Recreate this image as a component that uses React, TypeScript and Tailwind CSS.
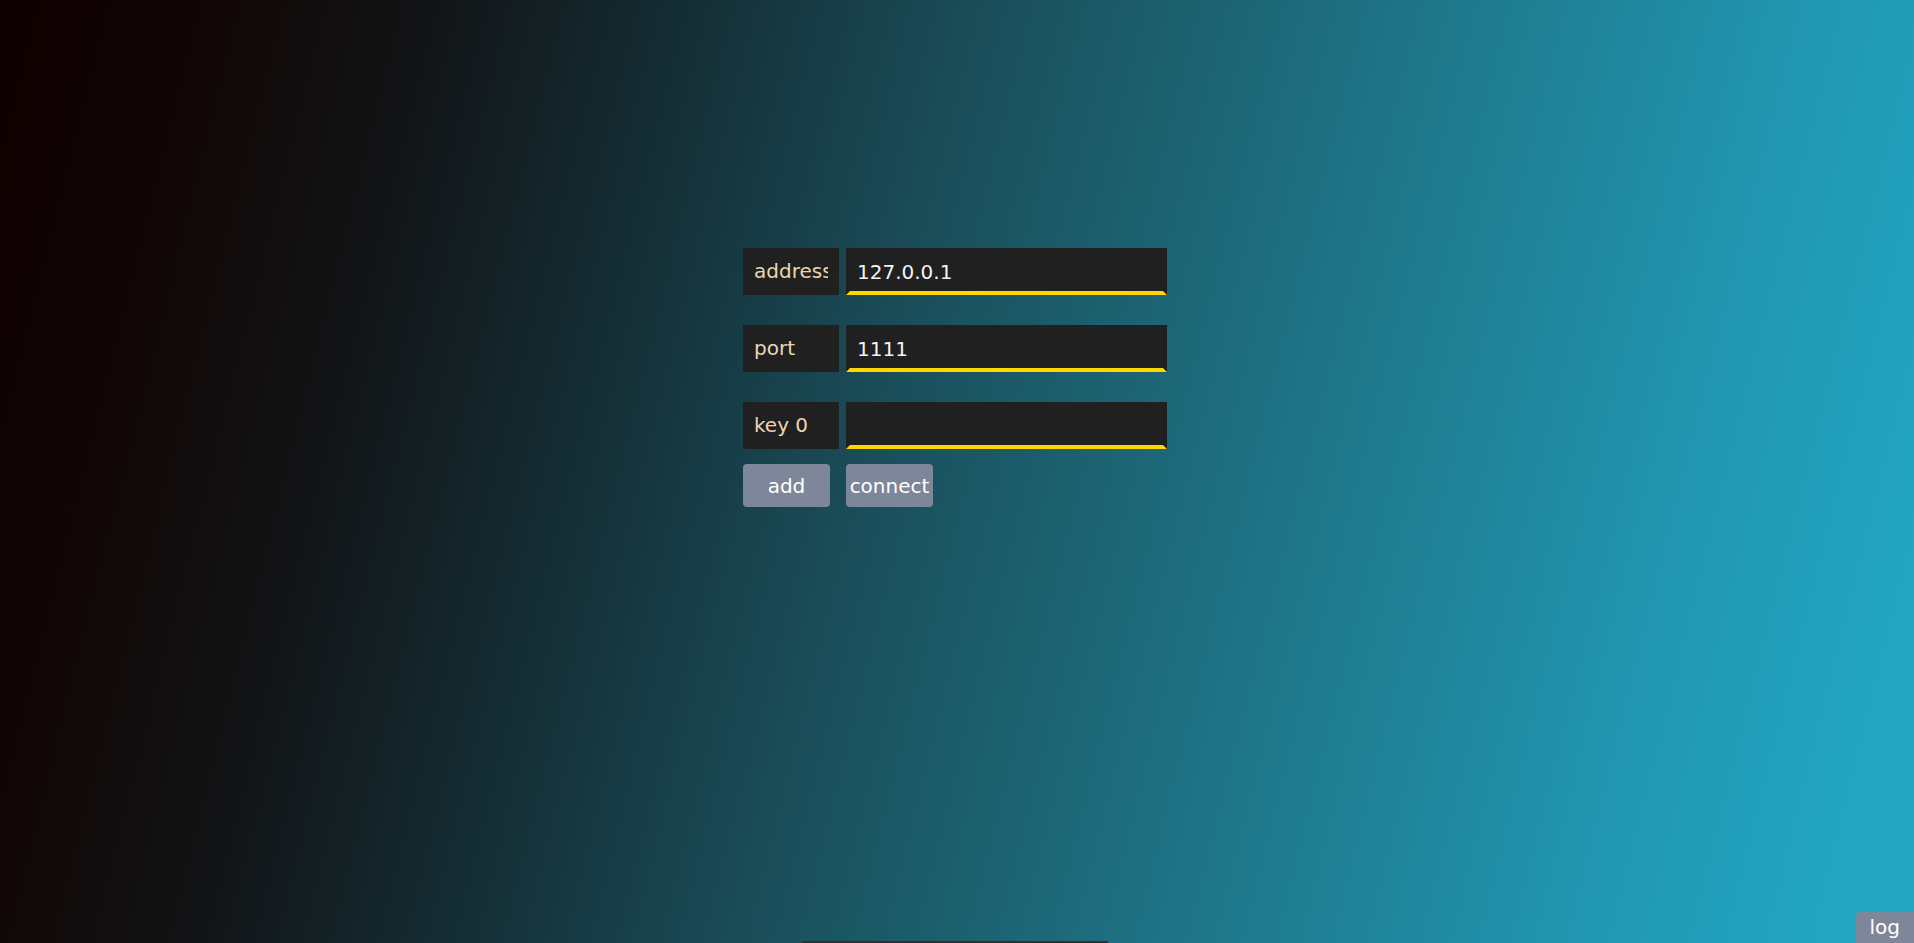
import { useState } from 'react';

const font = "font-['DejaVu_Sans',_'Liberation_Sans',_sans-serif]";

interface FieldRowProps {
  label: string;
  value: string;
  onChange: (v: string) => void;
}

function FieldRow({ label, value, onChange }: FieldRowProps) {
  return (
    <div className="flex h-[47px] gap-[7px]">
      <div className="w-[96px] shrink-0 overflow-hidden whitespace-nowrap bg-[#202020] px-[11px] text-[20px] leading-[47px] text-[#ebd6b0]">
        <div className="overflow-hidden">{label}</div>
      </div>
      <input
        type="text"
        value={value}
        onChange={(e) => onChange(e.target.value)}
        className="w-[321px] border-4 border-[#202020] border-b-[#ffd700] bg-[#202020] px-[7px] text-[20px] text-[#f2f2f2] outline-none"
      />
    </div>
  );
}

export default function App() {
  const [address, setAddress] = useState('127.0.0.1');
  const [port, setPort] = useState('1111');
  const [keys, setKeys] = useState<string[]>(['']);

  return (
    <div
      className={`relative min-h-screen w-full overflow-hidden bg-[linear-gradient(104deg,#100000_0%,#110606_10%,#121416_20%,#15323a_34%,#1a4e5a_46%,#1e7587_66%,#2196b1_84%,#22a6c2_96%)] ${font}`}
    >
      <div className="flex flex-col items-center pt-[248px] pr-[4px]">
        <div className="flex w-[424px] flex-col gap-[30px]">
          <FieldRow label="address" value={address} onChange={setAddress} />
          <FieldRow label="port" value={port} onChange={setPort} />
          {keys.map((k, i) => (
            <FieldRow
              key={i}
              label={`key ${i}`}
              value={k}
              onChange={(v) => setKeys(keys.map((x, j) => (j === i ? v : x)))}
            />
          ))}
        </div>
        <div className="mt-[15px] flex w-[424px] gap-[16px]">
          <button
            onClick={() => setKeys([...keys, ''])}
            className="h-[43px] w-[87px] rounded-[4px] bg-[#7e8799] text-[20px] text-white"
          >
            add
          </button>
          <button className="h-[43px] w-[87px] rounded-[4px] bg-[#7e8799] text-[20px] text-white">
            connect
          </button>
        </div>
      </div>

      <div className="fixed bottom-0 left-[802px] h-[2px] w-[306px] bg-[#2f2f2f]" />

      <button className="fixed right-0 bottom-0 rounded-tl-[4px] bg-[#7e8799] px-[14px] py-[4px] text-[20px] leading-[23px] text-white">
        log
      </button>
    </div>
  );
}
